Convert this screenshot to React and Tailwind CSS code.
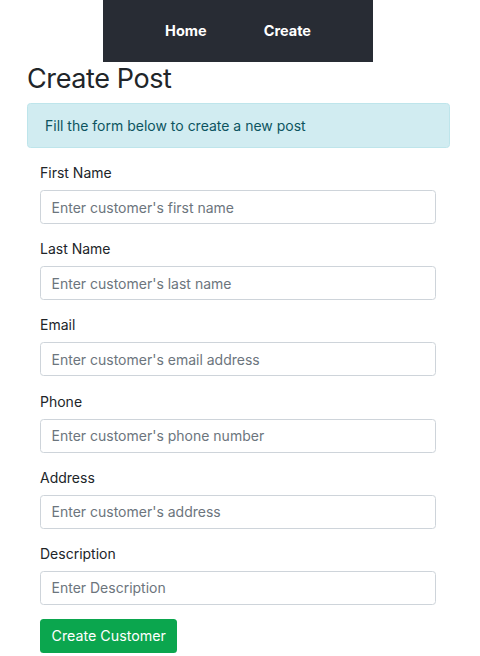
import React from 'react';

const fields = [
  { label: 'First Name', placeholder: "Enter customer's first name" },
  { label: 'Last Name', placeholder: "Enter customer's last name" },
  { label: 'Email', placeholder: "Enter customer's email address" },
  { label: 'Phone', placeholder: "Enter customer's phone number" },
  { label: 'Address', placeholder: "Enter customer's address" },
  { label: 'Description', placeholder: 'Enter Description' },
];

export default function App() {
  return (
    <div className="min-h-[656px] bg-white text-[14px] leading-[21px] text-[#212529] font-['Inter','Liberation_Sans',sans-serif]">
      {/* Nav */}
      <div className="ml-[103px] flex h-[62px] w-[270px] items-center justify-center gap-[57px] bg-[#282c34] text-[14.5px] font-bold text-white">
        <a href="#" className="-mt-px">Home</a>
        <a href="#" className="-mt-px">Create</a>
      </div>

      <div className="w-[423px] ml-[27px]">
        <h1 className="mb-[7px] text-[27px] leading-[34px] tracking-[-0.4px] font-normal">Create Post</h1>
        <div className="mb-[14px] h-[45px] rounded-[3.5px] border border-[#bee5eb] bg-[#d1ecf1] px-[17px] py-[11px] text-[#0c5460]">
          Fill the form below to create a new post
        </div>

        <form className="pl-[13px] pr-[14px]" onSubmit={(e) => e.preventDefault()}>
          {fields.map((f) => (
            <div key={f.label} className="mb-[14.2px]">
              <label className="mb-[7px] block">{f.label}</label>
              <input
                type="text"
                placeholder={f.placeholder}
                className="block h-[34px] w-full rounded-[3.5px] border border-[#ced4da] px-[10.5px] text-[14px] text-[#495057] placeholder:text-[#6c757d] outline-none"
              />
            </div>
          ))}
          <button
            type="submit"
            className="h-[33.5px] rounded-[3.5px] bg-[#0ba64e] px-[11.5px] text-[14.25px] text-white"
          >
            Create Customer
          </button>
        </form>
      </div>
    </div>
  );
}
